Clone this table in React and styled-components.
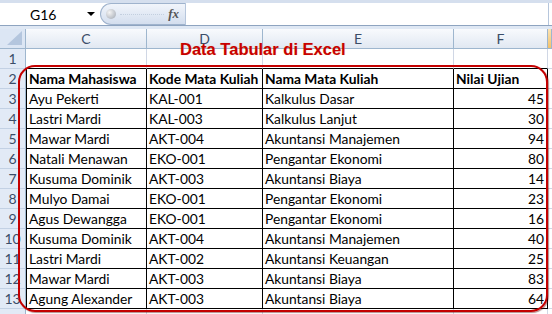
import styled, { createGlobalStyle } from "styled-components";

const GlobalStyle = createGlobalStyle`
  html, body {
    margin: 0;
    padding: 0;
    background: #ffffff;
  }
  body {
    width: 552px;
    height: 314px;
    overflow: hidden;
    font-family: Lato, "Liberation Sans", sans-serif;
  }
`;

const Window = styled.div`
  position: relative;
  width: 552px;
  height: 314px;
  overflow: hidden;
  background: #ffffff;
`;

const TopBar = styled.div`
  background: #d5dfee;
  padding-top: 3px;
`;

const FormulaRow = styled.div`
  display: flex;
  height: 22px;
  background: #ffffff;
  border-bottom: 1px solid #8ea4c0;
`;

const NameBox = styled.div`
  display: flex;
  align-items: center;
  width: 100px;
  padding-left: 30px;
  box-sizing: border-box;
  font-size: 14px;
  color: #000;
`;

const NameText = styled.span`
  flex: 1;
`;

const DropArrow = styled.span`
  width: 0;
  height: 0;
  margin-right: 5px;
  border-left: 4px solid transparent;
  border-right: 4px solid transparent;
  border-top: 4px solid #000;
`;

const Oval = styled.div`
  display: flex;
  align-items: center;
  width: 85px;
  box-sizing: border-box;
  padding: 0 6px 0 5px;
  border: 1px solid #9fb3cd;
  border-right: none;
  border-radius: 11px 0 0 11px;
  background: linear-gradient(#f1f5fb, #d3deee);
`;

const Knob = styled.span`
  width: 10px;
  height: 10px;
  border-radius: 50%;
  background: radial-gradient(circle at 35% 35%, #f4f4f4, #9ea5b0);
`;

const Dots = styled.span`
  flex: 1;
  margin: 0 4px;
  border-top: 1px dotted #c3cfdf;
`;

const Fx = styled.span`
  font-family: "Liberation Serif", serif;
  font-style: italic;
  font-weight: bold;
  font-size: 13px;
  color: #555;
`;

const FormulaInput = styled.div`
  flex: 1;
  border-left: 1px solid #b6c6dc;
  border-right: 1px solid #b6c6dc;
  margin-right: 3px;
`;

const Gap = styled.div`
  height: 3px;
  background: #dfe8f4;
`;

const Row = styled.div`
  display: grid;
  grid-template-columns: 26px 121px 116px 191px 94px 1fr;
  height: 20px;
`;

const Corner = styled.div`
  position: relative;
  background: #dce6f4;
  border-right: 1px solid #9eb6ce;
  border-bottom: 1px solid #9eb6ce;
  box-sizing: border-box;

  &::after {
    content: "";
    position: absolute;
    right: 3px;
    bottom: 3px;
    border-left: 15px solid transparent;
    border-bottom: 14px solid #b4c6de;
  }
`;

const ColHead = styled.div`
  box-sizing: border-box;
  text-align: center;
  font-size: 14px;
  line-height: 19px;
  color: #3b4d68;
  background: ${(p) =>
    p.$active
      ? "linear-gradient(#fbe3b4, #f3c26a)"
      : "linear-gradient(#f8fafd, #e1e8f2)"};
  border-right: 1px solid #9eb6ce;
  border-bottom: 1px solid #9eb6ce;
`;

const RowHead = styled.div`
  box-sizing: border-box;
  text-align: center;
  font-size: 14px;
  line-height: 19px;
  color: #3b4d68;
  background: #e2eaf6;
  border-right: 1px solid #9eb6ce;
  border-bottom: 1px solid #c3d1e4;
`;

const Cell = styled.div`
  box-sizing: border-box;
  overflow: hidden;
  white-space: nowrap;
  padding: 0 3px 0 ${(p) => (p.$first ? "3px" : "2px")};
  font-size: 13.8px;
  line-height: 19px;
  color: #000;
  font-weight: ${(p) => (p.$head ? 700 : 400)};
  text-align: ${(p) => (p.$num ? "right" : "left")};
  border-right: 1px solid ${(p) => (p.$boxed ? "#000" : "#d0d7e5")};
  border-bottom: 1px solid ${(p) => (p.$boxed || p.$above ? "#000" : "#d0d7e5")};
  box-shadow: ${(p) => (p.$boxed && p.$first ? "inset 1px 0 0 #000" : "none")};
`;

const Frame = styled.div`
  position: absolute;
  left: 18px;
  top: 65px;
  width: 530px;
  height: 247px;
  box-sizing: border-box;
  border: 2px solid #c40000;
  border-radius: 17px;
  box-shadow: 1px 1px 1px rgba(90, 0, 0, 0.45);
  pointer-events: none;
`;

const Title = styled.div`
  position: absolute;
  left: 180px;
  top: 40px;
  font-family: "Liberation Sans", Arial, sans-serif;
  font-weight: bold;
  font-size: 16.5px;
  color: #c80000;
  text-shadow: 0 0 1px rgba(230, 140, 0, 0.35);
`;

const columns = ["C", "D", "E", "F"];

const header = ["Nama Mahasiswa", "Kode Mata Kuliah", "Nama Mata Kuliah", "Nilai Ujian"];

const data = [
  ["Ayu Pekerti", "KAL-001", "Kalkulus Dasar", 45],
  ["Lastri Mardi", "KAL-003", "Kalkulus Lanjut", 30],
  ["Mawar Mardi", "AKT-004", "Akuntansi Manajemen", 94],
  ["Natali Menawan", "EKO-001", "Pengantar Ekonomi", 80],
  ["Kusuma Dominik", "AKT-003", "Akuntansi Biaya", 14],
  ["Mulyo Damai", "EKO-001", "Pengantar Ekonomi", 23],
  ["Agus Dewangga", "EKO-001", "Pengantar Ekonomi", 16],
  ["Kusuma Dominik", "AKT-004", "Akuntansi Manajemen", 40],
  ["Lastri Mardi", "AKT-002", "Akuntansi Keuangan", 25],
  ["Mawar Mardi", "AKT-003", "Akuntansi Biaya", 83],
  ["Agung Alexander", "AKT-003", "Akuntansi Biaya", 64],
];

const App = () => {
  const rows = [header, ...data];
  return (
    <Window>
      <GlobalStyle />
      <TopBar>
        <FormulaRow>
          <NameBox>
            <NameText>G16</NameText>
            <DropArrow />
          </NameBox>
          <Oval>
            <Knob />
            <Dots />
            <Fx>fx</Fx>
          </Oval>
          <FormulaInput />
        </FormulaRow>
        <Gap />
      </TopBar>

      <Row>
        <Corner />
        {columns.map((c) => (
          <ColHead key={c}>{c}</ColHead>
        ))}
        <ColHead $active />
      </Row>

      <Row>
        <RowHead>1</RowHead>
        {columns.map((c) => (
          <Cell key={c} $above />
        ))}
        <Cell />
      </Row>

      {rows.map((r, i) => (
        <Row key={i}>
          <RowHead>{i + 2}</RowHead>
          {r.map((v, j) => (
            <Cell
              key={j}
              $boxed
              $first={j === 0}
              $head={i === 0}
              $num={i > 0 && j === 3}
            >
              {v}
            </Cell>
          ))}
          <Cell />
        </Row>
      ))}

      <Row>
        <RowHead />
        {columns.map((c) => (
          <Cell key={c} />
        ))}
        <Cell />
      </Row>

      <Frame />
      <Title>Data Tabular di Excel</Title>
    </Window>
  );
};

export default App;
